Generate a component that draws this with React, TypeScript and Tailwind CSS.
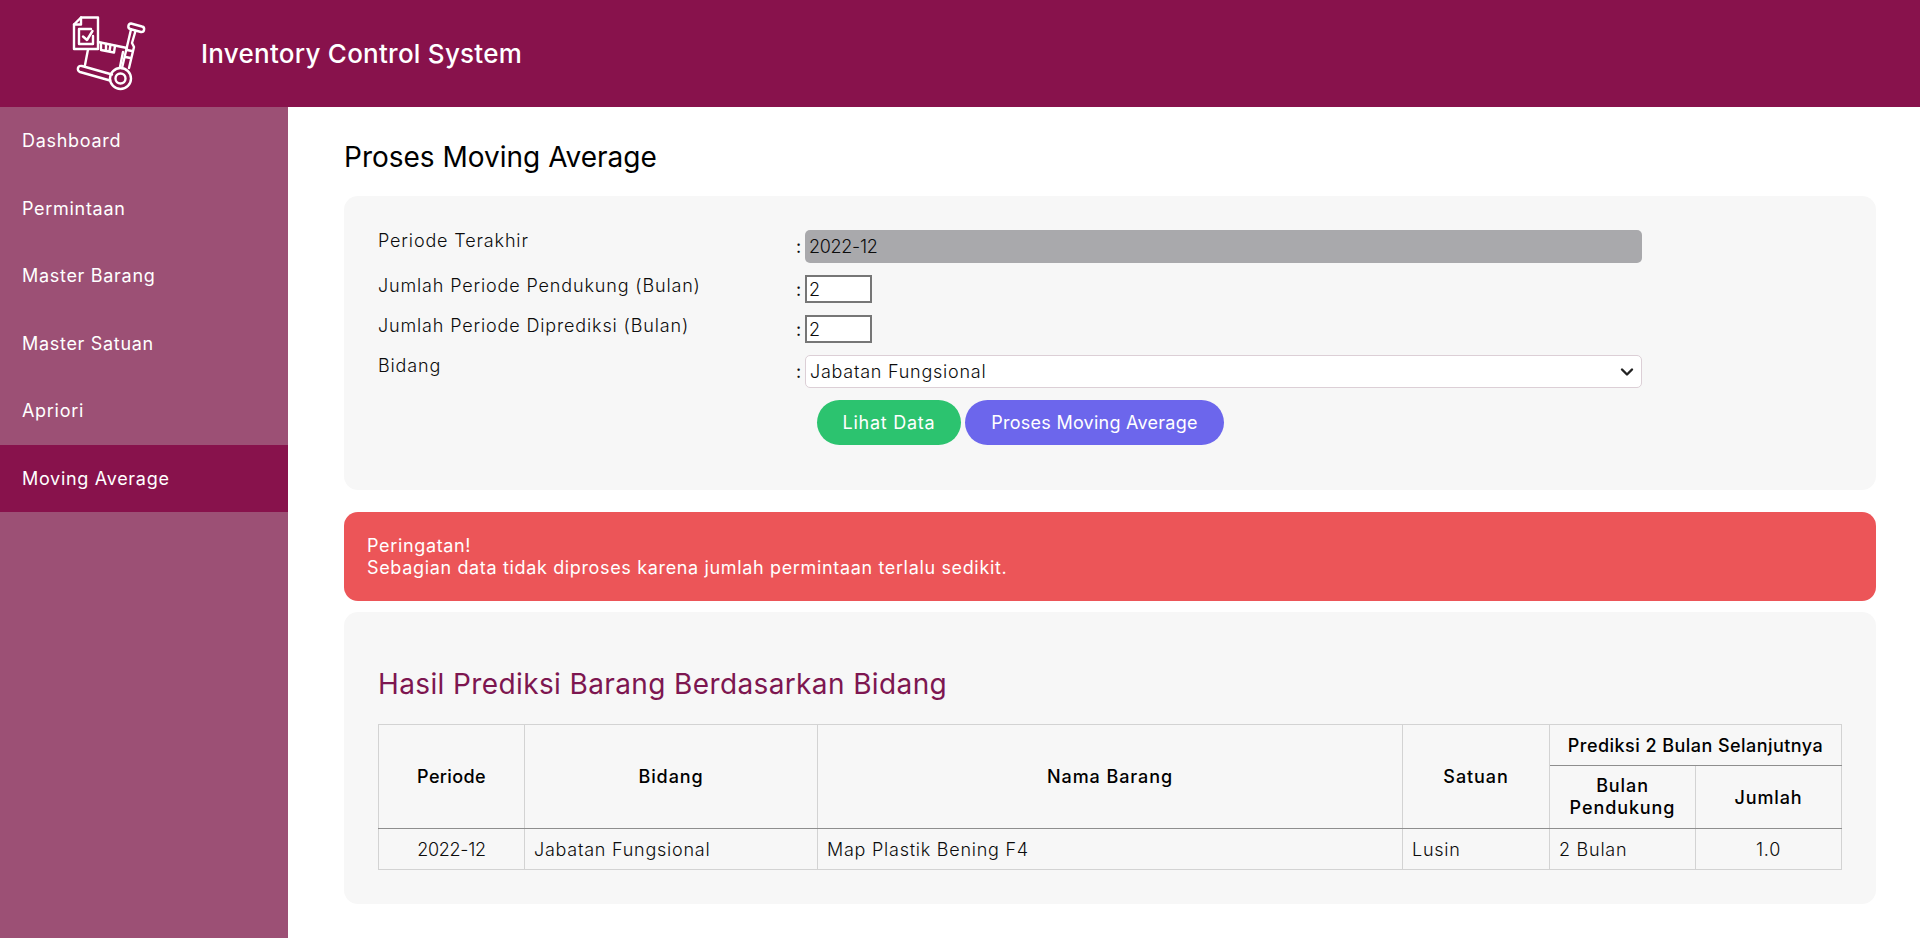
const menu = ["Dashboard", "Permintaan", "Master Barang", "Master Satuan", "Apriori", "Moving Average"];

const headCell = "border border-[#d3d3d3] border-b-[#8e8e8e] font-medium";
const bodyCell = "border border-[#d3d3d3]";

function Logo() {
  return (
    <svg className="ml-[50px] h-[107px] w-[110px] shrink-0" viewBox="0 -5 110 107" fill="none" stroke="#fff" strokeWidth="2.4" strokeLinejoin="round" strokeLinecap="round">
      <path d="M31 12.500H48V44H24V19.500Z" />
      <path d="M31 12.500V19.500H24" />
      <path d="M41 24H29V39H43V31" />
      <path d="M33 31.500l4 3.500 5.500-9" />
      <path d="M48 37L77 43" />
      <path d="M51 38v7l13 2.500 1-6.500M56 39v6M60.500 40l-1 6" />
      <path d="M38 44.500L35 60" />
      <path d="M73 47L70 62" />
      <path d="M81 18.500L92 21.500a2.800 2.800 0 0 1-1 5.500L80 24a2.900 2.900 0 0 1 1-5.500Z" />
      <path d="M81 24.500L72 63M85.500 26L82 38l2 4-5 21" />
      <path d="M77 45l5 1M75.500 52l5 1" />
      <path d="M32 61L62 69.500M60 75.500L30 67a3.100 3.100 0 0 1 2-6" />
      <circle cx="70.500" cy="73.500" r="10.500" />
      <circle cx="70.500" cy="73.500" r="5" />
    </svg>
  );
}

function Row({ label, rowClass, children }: { label: string; rowClass: string; children: React.ReactNode }) {
  return (
    <div className={`flex items-start ${rowClass}`}>
      <div className="w-[418px] shrink-0 text-[18px] font-light leading-[22px] tracking-[0.85px]">{label}</div>
      <div className="flex flex-1 items-center">
        <span className="w-[9px] text-[18px]">:</span>
        {children}
      </div>
    </div>
  );
}

export default function App() {
  return (
    <div className="flex h-[938px] flex-col bg-white font-['Inter','Liberation_Sans',sans-serif] text-[#0c0c0c]">
      <header className="flex h-[107px] shrink-0 items-center bg-[#88124c] text-white">
        <Logo />
        <h1 className="ml-[41px] text-[26px] font-medium tracking-[0.25px]">Inventory Control System</h1>
      </header>
      <div className="flex flex-1">
        <nav className="w-[288px] shrink-0 bg-[#9c5075] text-white">
          {menu.map((item) => (
            <div
              key={item}
              className={`flex h-[67.5px] items-center px-[22px] text-[18px] tracking-[0.7px] ${item === "Moving Average" ? "bg-[#88124c]" : ""}`}
            >
              {item}
            </div>
          ))}
        </nav>
        <main className="flex-1 pl-[56px] pr-[45px]">
          <h2 className="mt-[32px] mb-[20px] h-[37px] text-[28px] font-normal leading-[37px] text-black">Proses Moving Average</h2>

          <section className="h-[294px] rounded-[14px] bg-[#f7f7f7] px-[34px] pt-[34px]">
            <Row label="Periode Terakhir" rowClass="h-[45px]">
              <div className="flex h-[33px] w-[837px] items-center rounded-[5px] bg-[#a9a9ac] px-[4px] text-[18px] font-light tracking-[-0.3px]">2022-12</div>
            </Row>
            <Row label="Jumlah Periode Pendukung (Bulan)" rowClass="h-[40px]">
              <div className="flex h-[28px] w-[67px] items-center border-2 border-[#767676] bg-white px-[2px] text-[18px] font-light">2</div>
            </Row>
            <Row label="Jumlah Periode Diprediksi (Bulan)" rowClass="h-[40px]">
              <div className="flex h-[28px] w-[67px] items-center border-2 border-[#767676] bg-white px-[2px] text-[18px] font-light">2</div>
            </Row>
            <Row label="Bidang" rowClass="h-[45px]">
              <div className="flex h-[33px] w-[837px] items-center justify-between rounded-[5px] border border-[#dccfd6] bg-white pl-[4px] pr-[6px] text-[18px] font-light tracking-[0.75px]">
                Jabatan Fungsional
                <svg width="16" height="16" viewBox="0 0 16 16" fill="none" stroke="#222" strokeWidth="2.4" strokeLinecap="round" strokeLinejoin="round"><path d="M3 5.500l5 5 5-5" /></svg>
              </div>
            </Row>
            <div className="flex gap-[4px] pl-[439px]">
              <button className="h-[45px] w-[144px] rounded-full bg-[#2cc36f] text-[18px] tracking-[0.75px] text-white">Lihat Data</button>
              <button className="h-[45px] w-[259px] rounded-full bg-[#6c66ec] text-[18px] tracking-[0.25px] text-white">Proses Moving Average</button>
            </div>
          </section>

          <div className="mt-[22px] h-[89px] rounded-[14px] bg-[#ec5558] px-[23px] pt-[23px] text-[18px] leading-[22px] tracking-[0.65px] text-white">
            <div>Peringatan!</div>
            <div>Sebagian data tidak diproses karena jumlah permintaan terlalu sedikit.</div>
          </div>

          <section className="mt-[11px] h-[292px] rounded-[14px] bg-[#f7f7f7] px-[34px] pt-[52px]">
            <h3 className="mb-[20px] h-[40px] text-[28px] font-normal leading-[40px] tracking-[0.38px] text-[#7d1650]">Hasil Prediksi Barang Berdasarkan Bidang</h3>
            <table className="w-[1464px] table-fixed border-collapse text-[18px]">
              <thead className="text-black">
                <tr className="h-[41px]">
                  <th rowSpan={2} className={`w-[146px] tracking-[0.35px] ${headCell}`}>Periode</th>
                  <th rowSpan={2} className={`w-[293px] tracking-[0.9px] ${headCell}`}>Bidang</th>
                  <th rowSpan={2} className={`w-[585px] tracking-[0.9px] ${headCell}`}>Nama Barang</th>
                  <th rowSpan={2} className={`w-[147px] tracking-[0.9px] ${headCell}`}>Satuan</th>
                  <th colSpan={2} className={`whitespace-nowrap tracking-[0.45px] ${headCell}`}>Prediksi 2 Bulan Selanjutnya</th>
                </tr>
                <tr className="h-[63px]">
                  <th className={`w-[146px] leading-[22px] tracking-[0.9px] ${headCell}`}>Bulan<br />Pendukung</th>
                  <th className={`w-[147px] tracking-[0.9px] ${headCell}`}>Jumlah</th>
                </tr>
              </thead>
              <tbody className="font-light tracking-[0.75px]">
                <tr className="h-[41px]">
                  <td className={`text-center tracking-[-0.3px] ${bodyCell}`}>2022-12</td>
                  <td className={`px-[9px] ${bodyCell}`}>Jabatan Fungsional</td>
                  <td className={`px-[9px] ${bodyCell}`}>Map Plastik Bening F4</td>
                  <td className={`px-[9px] ${bodyCell}`}>Lusin</td>
                  <td className={`px-[9px] ${bodyCell}`}>2 Bulan</td>
                  <td className={`text-center ${bodyCell}`}>1.0</td>
                </tr>
              </tbody>
            </table>
          </section>
        </main>
      </div>
    </div>
  );
}
